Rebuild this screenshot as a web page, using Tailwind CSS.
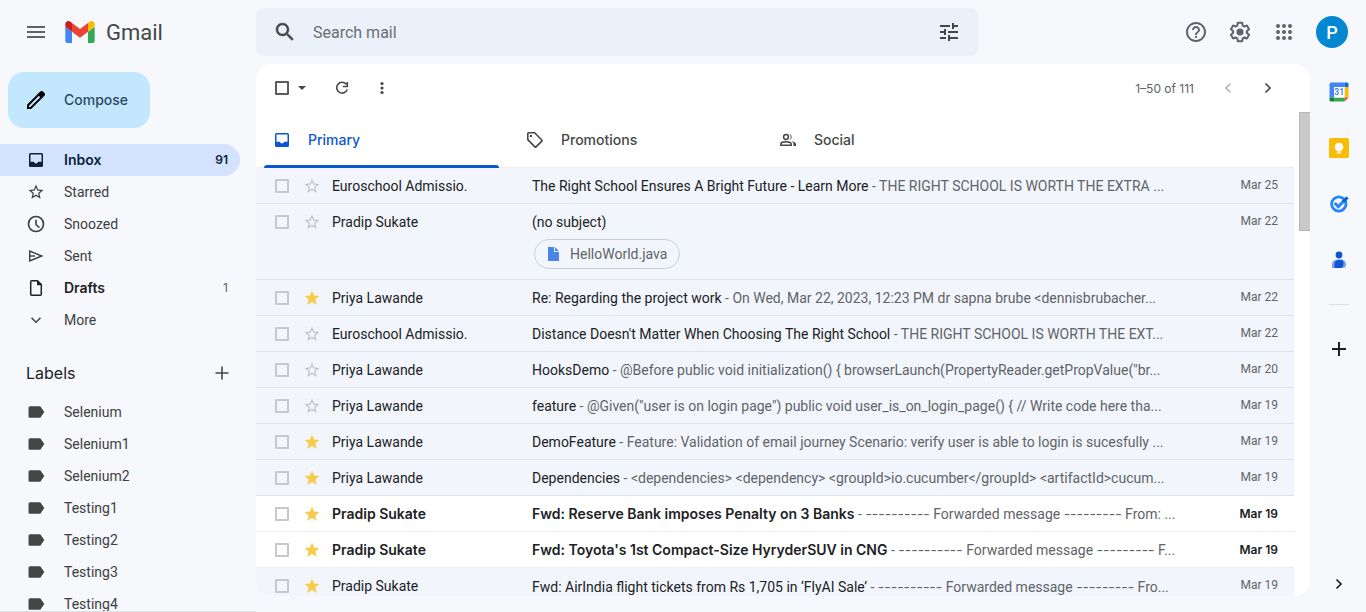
<!DOCTYPE html>
<html lang="en">
<head>
<meta charset="utf-8">
<meta name="viewport" content="width=device-width, initial-scale=1">
<title>Inbox - Gmail</title>
<script src="https://cdn.jsdelivr.net/npm/@tailwindcss/browser@4"></script>
</head>
<body class="flex h-screen flex-col overflow-hidden bg-[#f6f8fc] font-['Roboto','Inter',sans-serif] text-sm text-[#202124]">

<svg class="hidden" aria-hidden="true">
  <symbol id="inbox" viewBox="0 0 20 20"><path fill-rule="evenodd" d="M4.500 3h11A1.500 1.500 0 0 1 17 4.500v11a1.500 1.500 0 0 1-1.500 1.500h-11A1.500 1.500 0 0 1 3 15.500v-11A1.500 1.500 0 0 1 4.500 3zM4.500 4.500v7.300H8c.3 1.100 1 1.700 2 1.700s1.700-.6 2-1.700h3.500V4.500z"/></symbol>
  <symbol id="star-line" viewBox="0 0 24 24"><path d="M22 9.240l-7.190-.62L12 2 9.190 8.630 2 9.240l5.460 4.730L5.820 21 12 17.270 18.180 21l-1.630-7.030L22 9.240zM12 15.400l-3.760 2.270 1-4.280-3.320-2.880 4.380-.38L12 6.100l1.710 4.040 4.380.38-3.320 2.880 1 4.280L12 15.400z"/></symbol>
  <symbol id="star" viewBox="0 0 24 24"><path d="M12 17.270 18.180 21l-1.640-7.030L22 9.240l-7.190-.61L12 2 9.190 8.630 2 9.240l5.460 4.730L5.820 21z"/></symbol>
  <symbol id="clock" viewBox="0 0 24 24"><path d="M12 2a10 10 0 1 0 0 20 10 10 0 0 0 0-20zm0 18a8 8 0 1 1 0-16 8 8 0 0 1 0 16zm.9-13H11v5.800l4.500 4.200 1.200-1.300-3.800-3.500z"/></symbol>
  <symbol id="sent" viewBox="0 0 20 20"><path fill="none" stroke="currentColor" stroke-width="1.400" d="M3.700 5v10L15.800 10 3.700 5z"/><path fill="none" stroke="currentColor" stroke-width="1.400" d="M3.700 10H9"/></symbol>
  <symbol id="draft" viewBox="0 0 20 20"><path fill="none" stroke="currentColor" stroke-width="1.500" d="M5.500 2.800h6l3.800 3.800v9.600c0 .6-.4 1-1 1h-8.800c-.5 0-.8-.4-.8-1V3.800c0-.6.3-1 .8-1z"/><path d="M11 2.500v4.700h4.700z"/></symbol>
  <symbol id="label" viewBox="0 0 24 24"><path d="M17.630 5.840C17.270 5.330 16.670 5 16 5L5 5.010C3.900 5.010 3 5.900 3 7v10c0 1.100.9 1.990 2 1.990L16 19c.67 0 1.270-.33 1.630-.84L22 12l-4.370-6.160z"/></symbol>
  <symbol id="chevron" viewBox="0 0 20 20"><path fill="none" stroke="currentColor" stroke-width="1.700" d="m7.500 5.500 4.500 4.500-4.500 4.500"/></symbol>
  <symbol id="chevron-down" viewBox="0 0 20 20"><path fill="none" stroke="currentColor" stroke-width="1.500" d="m5.500 7.700 4.500 4.500 4.500-4.500"/></symbol>
  <symbol id="plus" viewBox="0 0 20 20"><path fill="none" stroke="currentColor" stroke-width="1.600" d="M10 3.500v13M3.500 10h13"/></symbol>
</svg>

<header class="flex h-16 shrink-0 items-center">
  <div class="flex w-64 shrink-0 items-center pl-6">
    <button type="button" aria-label="Main menu" class="text-[#5f6368]"><svg class="size-6" viewBox="0 0 24 24" fill="currentColor"><path d="M3 18h18v-2H3v2zm0-5h18v-2H3v2zm0-7v2h18V6H3z"/></svg></button>
    <a href="#" class="ml-[17px] flex items-center gap-[11px]">
      <svg class="h-[22px] w-[30px]" viewBox="52 42 88 66" aria-hidden="true"><path fill="#4285f4" d="M58 108h14V74L52 59v43c0 3.320 2.690 6 6 6"/><path fill="#34a853" d="M120 108h14c3.320 0 6-2.690 6-6V59l-20 15"/><path fill="#fbbc04" d="M120 48v26l20-15v-8c0-7.420-8.470-11.650-14.400-7.200"/><path fill="#ea4335" d="M72 74V48l24 18 24-18v26L96 92"/><path fill="#c5221f" d="M52 51v8l20 15V48l-5.600-4.200c-5.940-4.450-14.400-.22-14.400 7.200"/></svg>
      <span class="pt-[2px] text-[22px] leading-8 text-[#444746]">Gmail</span>
    </a>
  </div>
  <form role="search" class="flex h-12 max-w-[722px] flex-1 items-center rounded-lg bg-[#eaf1fb] px-[17px]">
    <button type="button" aria-label="Search" class="text-[#444746]"><svg class="size-6" viewBox="0 0 24 24" fill="currentColor"><path stroke="currentColor" stroke-width=".4" d="M15.500 14h-.79l-.28-.27C15.410 12.590 16 11.110 16 9.500 16 5.910 13.090 3 9.500 3S3 5.910 3 9.500 5.910 16 9.500 16c1.610 0 3.090-.59 4.230-1.570l.27.28v.79l5 4.990L20.490 19l-4.990-5zm-6 0C7.010 14 5 11.990 5 9.500S7.010 5 9.500 5 14 7.010 14 9.500 11.990 14 9.500 14z"/></svg></button>
    <input type="text" aria-label="Search mail" placeholder="Search mail" class="ml-4 min-w-0 flex-1 bg-transparent pt-[2px] text-base outline-none placeholder:text-[#6b6e70]">
    <button type="button" aria-label="Search options" class="text-[#444746]"><svg class="size-6" viewBox="0 0 24 24" fill="currentColor"><path d="M3 17v2h6v-2H3zM3 5v2h10V5H3zm10 16v-2h8v-2h-8v-2h-2v6h2zM7 9v2H3v2h4v2h2V9H7zm14 4v-2H11v2h10zm-6-4h2V7h4V5h-4V3h-2v6z"/></svg></button>
  </form>
  <div class="ml-auto flex items-center gap-5 pr-[18px] text-[#5f6368]">
    <button type="button" aria-label="Support"><svg class="size-6" viewBox="0 0 24 24" fill="currentColor"><path d="M11 18h2v-2h-2v2zm1-16C6.480 2 2 6.480 2 12s4.480 10 10 10 10-4.480 10-10S17.520 2 12 2zm0 18c-4.410 0-8-3.590-8-8s3.590-8 8-8 8 3.590 8 8-3.590 8-8 8zm0-14c-2.210 0-4 1.790-4 4h2c0-1.100.9-2 2-2s2 .9 2 2c0 2-3 1.750-3 5h2c0-2.250 3-2.500 3-5 0-2.210-1.790-4-4-4z"/></svg></button>
    <button type="button" aria-label="Settings"><svg class="size-6" viewBox="0 0 24 24" fill="currentColor"><path d="M13.850 22.250h-3.700c-.74 0-1.360-.54-1.450-1.270l-.27-1.890c-.27-.14-.53-.29-.79-.46l-1.800.72c-.7.26-1.470-.03-1.810-.65L2.200 15.530c-.35-.66-.2-1.440.36-1.880l1.530-1.190c-.01-.15-.02-.3-.02-.46 0-.15.01-.31.02-.46l-1.520-1.190c-.59-.45-.74-1.260-.37-1.880l1.850-3.190c.34-.62 1.110-.9 1.790-.63l1.810.73c.26-.17.52-.32.78-.46l.27-1.910c.09-.7.71-1.250 1.440-1.250h3.700c.74 0 1.360.54 1.450 1.270l.27 1.890c.27.14.53.29.79.46l1.800-.72c.71-.26 1.480.03 1.820.65l1.840 3.180c.36.66.2 1.440-.36 1.880l-1.520 1.190c.01.15.02.3.02.46s-.01.31-.02.46l1.520 1.190c.56.45.72 1.230.37 1.860l-1.860 3.220c-.34.62-1.110.9-1.800.63l-1.800-.72c-.26.17-.52.32-.78.46l-.27 1.910c-.1.68-.72 1.220-1.460 1.220zm-3.230-2h2.760l.37-2.550.53-.22c.44-.18.88-.44 1.340-.78l.45-.34 2.380.96 1.380-2.400-2.030-1.580.07-.56c.03-.26.06-.51.06-.78s-.03-.53-.06-.78l-.07-.56 2.030-1.580-1.390-2.400-2.390.96-.45-.35c-.42-.32-.87-.58-1.330-.77l-.52-.22-.37-2.550h-2.760l-.37 2.550-.53.21c-.44.19-.88.44-1.340.79l-.45.33-2.380-.95-1.390 2.390 2.030 1.580-.07.56a7 7 0 0 0-.06.79c0 .26.02.53.06.78l.07.56-2.030 1.580 1.380 2.400 2.390-.96.45.35c.43.33.86.58 1.330.77l.53.22.38 2.550z"/><circle cx="12" cy="12" r="3.500"/></svg></button>
    <button type="button" aria-label="Google apps"><svg class="size-6" viewBox="0 0 24 24" fill="currentColor"><circle cx="6" cy="6" r="2"/><circle cx="12" cy="6" r="2"/><circle cx="18" cy="6" r="2"/><circle cx="6" cy="12" r="2"/><circle cx="12" cy="12" r="2"/><circle cx="18" cy="12" r="2"/><circle cx="6" cy="18" r="2"/><circle cx="12" cy="18" r="2"/><circle cx="18" cy="18" r="2"/></svg></button>
    <button type="button" aria-label="Account" class="flex size-8 items-center justify-center rounded-full bg-[#0288d1] pt-[2px] text-lg font-medium text-white">P</button>
  </div>
</header>

<div class="flex min-h-0 flex-1">
  <aside class="flex w-64 shrink-0 flex-col overflow-hidden border-b border-[#dfe1e5]">
    <button type="button" class="mt-2 ml-2 flex h-14 shrink-0 items-center gap-4 self-start rounded-2xl bg-[#c2e7ff] pr-[22px] pl-4 font-['Inter','Roboto',sans-serif] font-medium text-[#2b4a60]">
      <svg class="size-6 text-black" viewBox="0 0 24 24" fill="currentColor"><path d="M20.410 4.940l-1.350-1.350c-.78-.78-2.050-.78-2.830 0L3 16.820V21h4.180L20.410 7.770c.79-.78.79-2.050 0-2.830zm-14 14.120L5 19v-1.360l9.820-9.820 1.410 1.410-9.820 9.830z"/></svg>
      Compose
    </button>
    <nav class="mt-4 mr-4 shrink-0 text-[#3c4043]" id="folders"></nav>
    <div class="mt-5 flex h-[34px] shrink-0 items-center justify-between pr-6 pl-[26px]">
      <h2 class="font-['Inter','Roboto',sans-serif] text-base text-[#202124]">Labels</h2>
      <button type="button" aria-label="Create new label" class="text-[#444746]"><svg class="size-5" fill="currentColor"><use href="#plus"/></svg></button>
    </div>
    <nav class="mt-[6px] mr-4 shrink-0 text-[#3c4043]" id="labels"></nav>
  </aside>

  <main class="mb-4 flex min-w-0 flex-1 flex-col overflow-hidden rounded-2xl bg-white">
    <div class="flex h-12 shrink-0 items-center pr-8 pl-[19px] text-[#444746]">
      <input type="checkbox" aria-label="Select all" class="size-[14px] appearance-none rounded-[1px] border-2 border-[#5a5d5c]">
      <button type="button" aria-label="Select menu" class="ml-2"><svg class="h-5 w-[10px]" viewBox="0 0 10 20" fill="currentColor"><path d="M1 8h8l-4 4z"/></svg></button>
      <button type="button" aria-label="Refresh" class="ml-[25px]"><svg class="size-5" viewBox="0 0 20 20"><path fill="none" stroke="currentColor" stroke-width="1.600" d="M14.200 6.200A5.400 5.400 0 1 0 15.200 11.500M15.300 4v4.500h-4.500"/></svg></button>
      <button type="button" aria-label="More" class="ml-5"><svg class="size-5" viewBox="0 0 20 20" fill="currentColor"><circle cx="10" cy="5.500" r="1.600"/><circle cx="10" cy="10" r="1.600"/><circle cx="10" cy="14.500" r="1.600"/></svg></button>
      <span class="ml-auto pt-px font-['Inter','Roboto',sans-serif] text-xs text-[#5f6368]">1–50 of 111</span>
      <button type="button" aria-label="Newer" disabled class="ml-6 text-[#b4b6b8]"><svg class="size-5 rotate-180"><use href="#chevron"/></svg></button>
      <button type="button" aria-label="Older" class="ml-5"><svg class="size-5"><use href="#chevron"/></svg></button>
    </div>

    <div class="relative min-h-0 flex-1 overflow-hidden">
      <div class="mr-4">
        <div role="tablist" class="flex h-14 border-b border-[#eceef1] pl-2 font-['Inter','Roboto',sans-serif] font-medium text-[#444746]">
          <button type="button" role="tab" aria-selected="true" class="relative flex w-[253px] items-center gap-4 pl-2 text-[#0b57d0]">
            <svg class="size-5" fill="currentColor"><use href="#inbox"/></svg>Primary
            <span class="absolute -bottom-px left-0 h-[3px] w-[235px] rounded-t-full bg-[#0b57d0]"></span>
          </button>
          <button type="button" role="tab" class="flex w-[253px] items-center gap-4 pl-2">
            <svg class="size-5" viewBox="0 0 20 20"><path fill="none" stroke="currentColor" stroke-width="1.600" stroke-linejoin="round" d="M2.800 3.600c0-.5.300-.8.800-.8h6l7.200 7.200c.4.400.4.800 0 1.100L11 16.900c-.4.400-.8.400-1.100 0L2.800 9.600z"/><circle cx="5.900" cy="5.900" r="1.200" fill="currentColor"/></svg>Promotions
          </button>
          <button type="button" role="tab" class="flex w-[253px] items-center gap-4 pl-2">
            <svg class="size-5" viewBox="0 0 20 20"><g fill="none" stroke="currentColor" stroke-width="1.500"><circle cx="8" cy="7" r="2.400"/><path d="M2.800 15.200v-1c0-1.600 2.600-2.500 5.200-2.500s5.200.9 5.200 2.500v1z"/></g><path fill="currentColor" d="M11.300 10.100a3.200 3.200 0 0 0 0-6.200 4.500 4.500 0 0 1 0 6.200zM13.600 11.300c2.200.3 4.400 1.200 4.400 2.900V16h-2.500v-2c0-1.100-.7-2-1.900-2.700z"/></svg>Social
          </button>
        </div>
        <ul id="mail"></ul>
      </div>
      <div class="absolute top-0 right-0 h-[119px] w-[11px] border border-r-0 border-[#b8b8b8] bg-[#c9c9c9]"></div>
    </div>
  </main>

  <aside class="flex w-14 shrink-0 flex-col items-center pt-[18px] pb-[18px] pl-[2px]">
    <button type="button" aria-label="Calendar"><svg class="size-5" viewBox="0 0 20 20"><path fill="#4285f4" d="M2 .5h13.500V5H5v10.500H.500V2A1.500 1.500 0 0 1 2 .5z"/><path fill="#1967d2" d="M15.500.5H18A1.500 1.500 0 0 1 19.500 2v3h-4z"/><path fill="#fbbc04" d="M15.500 5h4v10.500h-4z"/><path fill="#34a853" d="M5 15.500h10.500v4H5z"/><path fill="#188038" d="M.5 15.500H5v4H2A1.500 1.500 0 0 1 .5 18z"/><path fill="#ea4335" d="M15.500 15.500h4l-4 4z"/><path fill="#fff" d="M5 5h10.500v10.500H5z"/><text x="10.200" y="13.300" text-anchor="middle" font-family="Roboto" font-size="8.500" font-weight="700" fill="#4285f4">31</text></svg></button>
    <button type="button" aria-label="Keep" class="mt-9"><svg class="size-5" viewBox="0 0 20 20"><rect width="20" height="20" rx="1.500" fill="#fbbc04"/><path fill="#fff" d="M10 4.800a4.200 4.200 0 0 0-2.200 7.800v1h4.400v-1A4.200 4.200 0 0 0 10 4.800zM7.800 14.300h4.400v1.300H7.800z"/></svg></button>
    <button type="button" aria-label="Tasks" class="mt-9"><svg class="size-5" viewBox="0 0 20 20"><circle cx="9.800" cy="10" r="7.200" fill="none" stroke="#2684fc" stroke-width="2.800"/><path fill="none" stroke="#2684fc" stroke-width="3" d="m5.700 9 3.600 3.600 5.200-5.200"/><path fill="none" stroke="#0066da" stroke-width="3" d="m14 7.900 4.500-4.500"/></svg></button>
    <button type="button" aria-label="Contacts" class="mt-9"><svg class="size-5" viewBox="0 0 20 20"><circle cx="10" cy="5" r="3.400" fill="#0b57d0"/><path fill="#7b9df5" d="M3 18v-3.500C3 11.800 5 9.800 7.500 9.800h5c2.500 0 4.500 2 4.500 4.700 0 2-1 3.500-3 3.500z"/><path fill="#0b57d0" d="M5.500 18v-3c0-3 1.700-5.200 4.500-5.200h2.200c1.600 0 2.300 1.500 2.300 3.200 0 3-1 5-3.500 5z"/></svg></button>
    <hr class="mt-[34px] w-5 border-[#dfe1dc]">
    <button type="button" aria-label="Get add-ons" class="mt-[34px] text-[#1f1f1f]"><svg class="size-5" viewBox="0 0 20 20"><path fill="none" stroke="currentColor" stroke-width="2" d="M10 3v14M3 10h14"/></svg></button>
    <button type="button" aria-label="Hide side panel" class="mt-auto text-[#1f1f1f]"><svg class="size-5"><use href="#chevron"/></svg></button>
  </aside>
</div>

<script>
const folders = [['Inbox','inbox','91'],['Starred','star-line',''],['Snoozed','clock',''],['Sent','sent',''],['Drafts','draft','1'],['More','chevron-down','']];
document.getElementById('folders').innerHTML = folders.map(([name, icon, count]) => {
  const style = name === 'Inbox' ? "bg-[#d3e3fd] font-['Inter','Roboto',sans-serif] font-semibold text-[#0a2240]" : name === 'Drafts' ? "font-['Inter','Roboto',sans-serif] font-semibold text-[#202124]" : '';
  const size = icon === 'star-line' ? 'size-[18px]' : 'size-5';
  return `<a href="#" class="flex h-8 items-center rounded-r-full pr-3 pl-[26px] ${style}">
    <span class="mr-[18px] flex w-5 justify-center"><svg class="${size}" fill="currentColor"><use href="#${icon}"/></svg></span>${name}
    <span class="ml-auto text-xs ${name === 'Drafts' ? 'font-normal text-[#5f6368]' : ''}">${count}</span></a>`;
}).join('');

document.getElementById('labels').innerHTML = ['Selenium','Selenium1','Selenium2','Testing1','Testing2','Testing3','Testing4'].map(name =>
  `<a href="#" class="flex h-8 items-center gap-[18px] pl-[26px]"><svg class="size-5 text-[#444746]" fill="currentColor"><use href="#label"/></svg>${name}</a>`).join('');

const mail = [
  {from:'Euroschool Admissio.', subject:'The Right School Ensures A Bright Future - Learn More', text:'THE RIGHT SCHOOL IS WORTH THE EXTRA ...', date:'Mar 25'},
  {from:'Pradip Sukate', subject:'(no subject)', file:'HelloWorld.java', date:'Mar 22'},
  {from:'Priya Lawande', star:1, subject:'Re: Regarding the project work', text:'On Wed, Mar 22, 2023, 12:23 PM dr sapna brube &lt;dennisbrubacher...', date:'Mar 22'},
  {from:'Euroschool Admissio.', subject:"Distance Doesn't Matter When Choosing The Right School", text:'THE RIGHT SCHOOL IS WORTH THE EXT...', date:'Mar 22'},
  {from:'Priya Lawande', subject:'HooksDemo', text:'@Before public void initialization() { browserLaunch(PropertyReader.getPropValue("br...', date:'Mar 20'},
  {from:'Priya Lawande', subject:'feature', text:'@Given("user is on login page") public void user_is_on_login_page() { // Write code here tha...', date:'Mar 19'},
  {from:'Priya Lawande', star:1, subject:'DemoFeature', text:'Feature: Validation of email journey Scenario: verify user is able to login is sucesfully ...', date:'Mar 19'},
  {from:'Priya Lawande', star:1, subject:'Dependencies', text:'&lt;dependencies&gt; &lt;dependency&gt; &lt;groupId&gt;io.cucumber&lt;/groupId&gt; &lt;artifactId&gt;cucum...', date:'Mar 19'},
  {from:'Pradip Sukate', star:1, unread:1, subject:'Fwd: Reserve Bank imposes Penalty on 3 Banks', text:'---------- Forwarded message --------- From: ...', date:'Mar 19'},
  {from:'Pradip Sukate', star:1, unread:1, subject:"Fwd: Toyota's 1st Compact-Size HyryderSUV in CNG", text:'---------- Forwarded message --------- F...', date:'Mar 19'},
  {from:'Pradip Sukate', star:1, subject:'Fwd: AirIndia flight tickets from Rs 1,705 in ‘FlyAI Sale’', text:'---------- Forwarded message --------- Fro...', date:'Mar 19'}
];
// Runs of hyphens are set in Inter, whose hyphens stay separate.
const dashes = text => text.replace(/-{9,}/g, run => `<span class="font-['Inter',sans-serif]">${run}</span>`);
document.getElementById('mail').innerHTML = mail.map(m => `
  <li class="flex items-start border-b pr-4 pl-[19px] ${m.unread ? "border-[#eceff1] bg-white font-['Inter','Roboto',sans-serif] leading-[35px] font-semibold" : 'border-[#dfe3eb] bg-[#f2f6fc] leading-[37px]'}">
    <span class="flex h-[35px] w-[57px] shrink-0 items-center gap-[14px]">
      <input type="checkbox" aria-label="Select ${m.from}" class="size-[14px] shrink-0 appearance-none rounded-[1px] border-2 border-[#c6c8cc]">
      <button type="button" aria-label="Star ${m.from}" class="shrink-0 ${m.star ? 'text-[#f7cb4d]' : 'text-[#bfc2c6]'}"><svg class="size-[18px]" fill="currentColor"><use href="${m.star ? '#star' : '#star-line'}"/></svg></button>
    </span>
    <span class="h-[35px] w-[200px] shrink-0 whitespace-nowrap">${m.from}</span>
    <div class="min-w-0 flex-1">
      <a href="#" class="block h-[35px] whitespace-nowrap">${m.subject}${m.text ? ` <span class="font-['Roboto','Inter',sans-serif] font-normal text-[#5f6368]">- ${dashes(m.text)}</span>` : ''}</a>
      ${m.file ? `<button type="button" class="mb-[10px] ml-[2px] flex h-[30px] items-center gap-[10px] rounded-full border border-[#c7d0da] px-3 text-[#5f6368]"><svg class="h-[14px] w-[13px]" viewBox="0 0 13 14"><path fill="#4986e7" d="M1 0h6v5h5v9H1z"/><path fill="#4986e7" d="M8 0l4 4H8z"/></svg>${m.file}</button>` : ''}
    </div>
    <span class="h-[35px] w-24 shrink-0 text-right text-xs leading-[35px] ${m.unread ? '' : 'text-[#5f6368]'}">${m.date}</span>
  </li>`).join('');
</script>
</body>
</html>
